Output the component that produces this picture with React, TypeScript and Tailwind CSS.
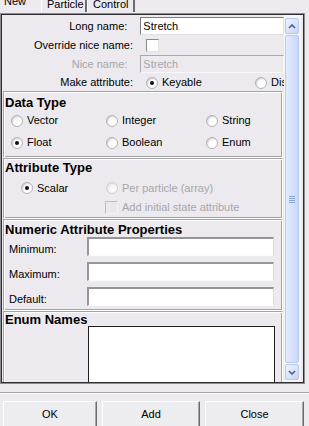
import React from "react";

// ─────────────────────────────────────────────────────────────────────────────
// Small controls
// ─────────────────────────────────────────────────────────────────────────────

function Radio({ checked = false, disabled = false }: { checked?: boolean; disabled?: boolean }) {
  return (
    <svg width="12" height="12" viewBox="0 0 12 12" className="shrink-0">
      <defs>
        <radialGradient id={disabled ? "rgd" : "rg"} cx="0.65" cy="0.65" r="0.7">
          <stop offset="0" stopColor="#ffffff" />
          <stop offset="0.6" stopColor={disabled ? "#f3f2f4" : "#fbfbfb"} />
          <stop offset="1" stopColor={disabled ? "#dddce0" : "#c9c8cc"} />
        </radialGradient>
      </defs>
      <circle
        cx="6"
        cy="6"
        r="5.5"
        fill={`url(#${disabled ? "rgd" : "rg"})`}
        stroke={disabled ? "#d0cfd3" : "#b3b2b6"}
      />
      {checked && <circle cx="6" cy="6" r="2" fill="#111" />}
    </svg>
  );
}

function Checkbox({ disabled = false }: { disabled?: boolean }) {
  return (
    <div
      className={
        disabled
          ? "w-[13px] h-[13px] shrink-0 border border-t-[#bdbcc0] border-l-[#bdbcc0] border-b-[#f4f3f5] border-r-[#f4f3f5] bg-[#e9e8eb]"
          : "w-[13px] h-[13px] shrink-0 border border-t-[#8a898d] border-l-[#8a898d] border-b-[#e2e1e4] border-r-[#e2e1e4] bg-white"
      }
    />
  );
}

function NumInput() {
  return (
    <div className="w-[187px] h-[19px] bg-white border-t-2 border-l-2 border-b border-r border-t-[#96959a] border-l-[#96959a] border-b-[#fbfbfb] border-r-[#dcdbdf]" />
  );
}

function Section({ title, className, children }: { title: string; className: string; children?: React.ReactNode }) {
  return (
    <div
      className={`ml-[1px] w-[280px] border border-t-[#a3a2a6] border-l-[#a3a2a6] border-b-white border-r-white shadow-[inset_1px_1px_0_#fff,inset_-1px_-1px_0_#a3a2a6] ${className}`}
    >
      <div className="pl-[1px] h-[16px] leading-[16px] text-[13px] font-bold">{title}</div>
      {children}
    </div>
  );
}

// ─────────────────────────────────────────────────────────────────────────────
// Scrollbar
// ─────────────────────────────────────────────────────────────────────────────

function ScrollButton({ up }: { up?: boolean }) {
  return (
    <div className="w-[14px] h-[16px] rounded-[2px] border border-[#b7c7ee] bg-gradient-to-br from-[#eef3fe] to-[#c6d5fa] flex items-center justify-center">
      <svg width="8" height="5" viewBox="0 0 8 5">
        <polyline
          points={up ? "1,4 4,1 7,4" : "1,1 4,4 7,1"}
          fill="none"
          stroke="#4e5f86"
          strokeWidth="1.6"
        />
      </svg>
    </div>
  );
}

function Scrollbar() {
  return (
    <div className="w-[17px] h-full bg-[#f7f6f3] pl-[1px] pt-[3px] flex flex-col">
      <ScrollButton up />
      <div className="mt-[1px] w-[14px] h-[328px] rounded-[2px] border border-[#b9cbf3] bg-gradient-to-r from-[#e4ebfd] to-[#c8d7fb] flex flex-col items-center justify-center gap-[1px]">
        {[0, 1, 2, 3].map((i) => (
          <div key={i} className="w-[6px] h-[1px] bg-[#8ea3d6]" />
        ))}
      </div>
      <div className="mt-[1px]">
        <ScrollButton />
      </div>
    </div>
  );
}

// ─────────────────────────────────────────────────────────────────────────────
// Main
// ─────────────────────────────────────────────────────────────────────────────

export default function App() {
  return (
    <div className="w-[309px] h-[426px] overflow-hidden bg-[#eceaee] text-[11px] leading-[13px] text-black font-['Liberation_Sans',Arial,sans-serif]">
      {/* Tabs */}
      <div className="flex h-[13px]">
        <div className="relative w-[41px] h-[12px]">
          <span className="absolute left-[4px] top-[-5px]">New</span>
        </div>
        <div className="relative w-[46px] h-[12px] border-l border-l-white border-r-2 border-r-[#6d6c70]">
          <span className="absolute left-[5px] top-[-2px]">Particle</span>
        </div>
        <div className="relative w-[48px] h-[12px] border-l border-l-white border-r-2 border-r-[#6d6c70]">
          <span className="absolute left-[5px] top-[-2px]">Control</span>
        </div>
      </div>

      {/* Frame */}
      <div className="w-[305px] h-[371px] border border-[#8c8b8f]">
        <div className="h-full border border-[#2e2e30] flex">
          <div className="w-[282px] h-full overflow-hidden">
            {/* Top rows */}
            <div className="flex items-center h-[22px]">
              <div className="w-[131px] text-right">Long name:</div>
              <div className="ml-[13px] w-[150px] h-[18px] bg-white border border-t-[#7c7b80] border-l-[#7c7b80] border-b-[#e1e0e4] border-r-[#e1e0e4] pl-[2px] leading-[16px]">
                Stretch
              </div>
            </div>
            <div className="flex items-center h-[17px]">
              <div className="w-[131px] text-right">Override nice name:</div>
              <div className="ml-[13px]">
                <Checkbox />
              </div>
            </div>
            <div className="flex items-center h-[20px]">
              <div className="w-[131px] text-right text-[#a7a6aa]">Nice name:</div>
              <div className="ml-[13px] w-[150px] h-[18px] border border-t-[#a9a8ac] border-l-[#a9a8ac] border-b-[#f7f6f8] border-r-[#f7f6f8] pl-[2px] leading-[16px] text-[#a7a6aa]">
                Stretch
              </div>
            </div>
            <div className="flex items-center h-[17px] whitespace-nowrap">
              <div className="w-[131px] shrink-0 text-right">Make attribute:</div>
              <div className="ml-[13px] w-[109px] shrink-0 flex items-center gap-[4px]">
                <Radio checked />
                <span>Keyable</span>
              </div>
              <div className="shrink-0 flex items-center gap-[4px]">
                <Radio />
                <span>Displayable</span>
              </div>
            </div>

            {/* Data Type */}
            <Section title="Data Type" className="h-[67px] pt-[3px]">
              <div className="flex items-center h-[19px] pl-[7px]">
                <div className="w-[95px] flex items-center gap-[4px]">
                  <Radio />
                  <span>Vector</span>
                </div>
                <div className="w-[100px] flex items-center gap-[4px]">
                  <Radio />
                  <span>Integer</span>
                </div>
                <div className="flex items-center gap-[4px]">
                  <Radio />
                  <span>String</span>
                </div>
              </div>
              <div className="flex items-center h-[25px] pl-[7px]">
                <div className="w-[95px] flex items-center gap-[4px]">
                  <Radio checked />
                  <span>Float</span>
                </div>
                <div className="w-[100px] flex items-center gap-[4px]">
                  <Radio />
                  <span>Boolean</span>
                </div>
                <div className="flex items-center gap-[4px]">
                  <Radio />
                  <span>Enum</span>
                </div>
              </div>
            </Section>

            {/* Attribute Type */}
            <Section title="Attribute Type" className="h-[61px] pt-[1px]">
              <div className="flex items-center h-[24px] pl-[17px]">
                <div className="w-[85px] flex items-center gap-[4px]">
                  <Radio checked />
                  <span>Scalar</span>
                </div>
                <div className="flex items-center gap-[4px] text-[#a7a6aa]">
                  <Radio disabled />
                  <span>Per particle (array)</span>
                </div>
              </div>
              <div className="flex items-center h-[14px] pl-[101px] gap-[4px] text-[#a7a6aa]">
                <Checkbox disabled />
                <span>Add initial state attribute</span>
              </div>
            </Section>

            {/* Numeric Attribute Properties */}
            <Section title="Numeric Attribute Properties" className="h-[92px] pt-[2px]">
              <div className="flex flex-col gap-[6px] mt-[-1px]">
                {["Minimum:", "Maximum:", "Default:"].map((label) => (
                  <div key={label} className="flex items-center pl-[5px]">
                    <div className="w-[78px] mt-[5px]">{label}</div>
                    <NumInput />
                  </div>
                ))}
              </div>
            </Section>

            {/* Enum Names */}
            <Section title="Enum Names" className="h-[100px] pt-[0px]">
              <div className="ml-[84px] mt-[-2px] w-[187px] h-[75px] bg-white border border-[#1f1f21]" />
            </Section>
          </div>
          <Scrollbar />
        </div>
      </div>

      {/* Separator */}
      <div className="mt-[8px] h-[2px] border-t border-t-[#a3a2a6] border-b border-b-white" />

      {/* Buttons */}
      <div className="mt-[7px] flex pl-[3px] gap-[5px]">
        {[
          { label: "OK", w: "w-[94px]" },
          { label: "Add", w: "w-[98px]" },
          { label: "Close", w: "w-[99px]" },
        ].map((b) => (
          <div
            key={b.label}
            className={`${b.w} h-[30px] pt-[6px] text-center bg-[#edecef] border border-t-white border-l-white border-r-[#6b6a6e] border-b-[#6b6a6e] shadow-[inset_-1px_-1px_0_#a6a5a9]`}
          >
            {b.label}
          </div>
        ))}
      </div>
    </div>
  );
}
